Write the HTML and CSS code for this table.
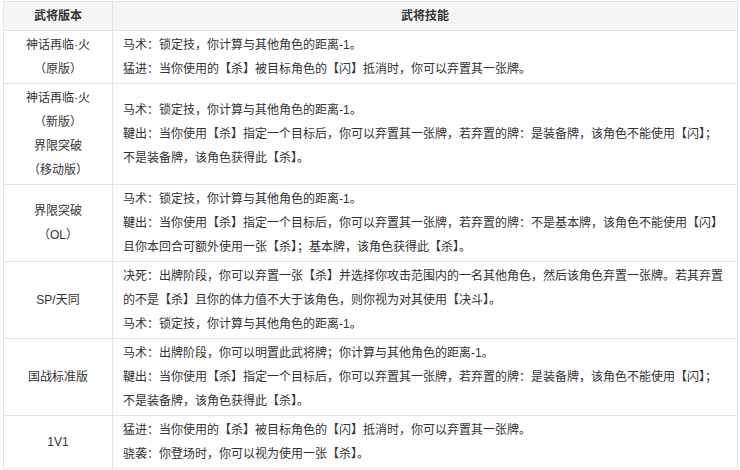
FILE: index.html
```html
<!DOCTYPE html>
<html lang="zh-CN">
<head>
<meta charset="utf-8">
<title>武将技能</title>
<link rel="stylesheet" href="styles.css">
</head>
<body>
<div class="wrap">
<table class="skills">
  <thead>
    <tr><th class="ver">武将版本</th><th class="skill">武将技能</th></tr>
  </thead>
  <tbody>
    <tr>
      <td class="ver">神话再临·火<br>（原版）</td>
      <td class="skill">马术：锁定技，你计算与其他角色的距离-1。<br>猛进：当你使用的【杀】被目标角色的【闪】抵消时，你可以弃置其一张牌。</td>
    </tr>
    <tr>
      <td class="ver">神话再临·火<br>（新版）<br>界限突破<br>（移动版）</td>
      <td class="skill">马术：锁定技，你计算与其他角色的距离-1。<br>鞬出：当你使用【杀】指定一个目标后，你可以弃置其一张牌，若弃置的牌：是装备牌，该角色不能使用【闪】；不是装备牌，该角色获得此【杀】。</td>
    </tr>
    <tr>
      <td class="ver">界限突破<br>（OL）</td>
      <td class="skill">马术：锁定技，你计算与其他角色的距离-1。<br>鞬出：当你使用【杀】指定一个目标后，你可以弃置其一张牌，若弃置的牌：不是基本牌，该角色不能使用【闪】且你本回合可额外使用一张【杀】；基本牌，该角色获得此【杀】。</td>
    </tr>
    <tr>
      <td class="ver">SP/天同</td>
      <td class="skill">决死：出牌阶段，你可以弃置一张【杀】并选择你攻击范围内的一名其他角色，然后该角色弃置一张牌。若其弃置的不是【杀】且你的体力值不大于该角色，则你视为对其使用【决斗】。<br>马术：锁定技，你计算与其他角色的距离-1。</td>
    </tr>
    <tr>
      <td class="ver">国战标准版</td>
      <td class="skill">马术：出牌阶段，你可以明置此武将牌；你计算与其他角色的距离-1。<br>鞬出：当你使用【杀】指定一个目标后，你可以弃置其一张牌，若弃置的牌：是装备牌，该角色不能使用【闪】；不是装备牌，该角色获得此【杀】。</td>
    </tr>
    <tr>
      <td class="ver">1V1</td>
      <td class="skill">猛进：当你使用的【杀】被目标角色的【闪】抵消时，你可以弃置其一张牌。<br>骁袭：你登场时，你可以视为使用一张【杀】。</td>
    </tr>
  </tbody>
</table>
</div>
</body>
</html>
```
FILE: styles.css
```css
html, body {
  margin: 0;
  padding: 0;
  background: #ffffff;
}
.wrap {
  padding: 1px 2px 0 3px;
}
.skills {
  width: 735px;
  border-collapse: collapse;
  font-family: "Liberation Sans", "Noto Sans CJK SC", sans-serif;
  font-size: 12px;
  line-height: 24px;
  color: #333333;
}
.skills th,
.skills td {
  border: 1px solid #e3e3e3;
  padding: 2px 10px;
  vertical-align: middle;
}
.skills th {
  background: #f5f5f5;
  font-weight: bold;
  text-align: center;
  color: #333333;
}
.skills .ver {
  width: 88px;
  text-align: center;
}
.skills td.skill {
  text-align: left;
}
```
